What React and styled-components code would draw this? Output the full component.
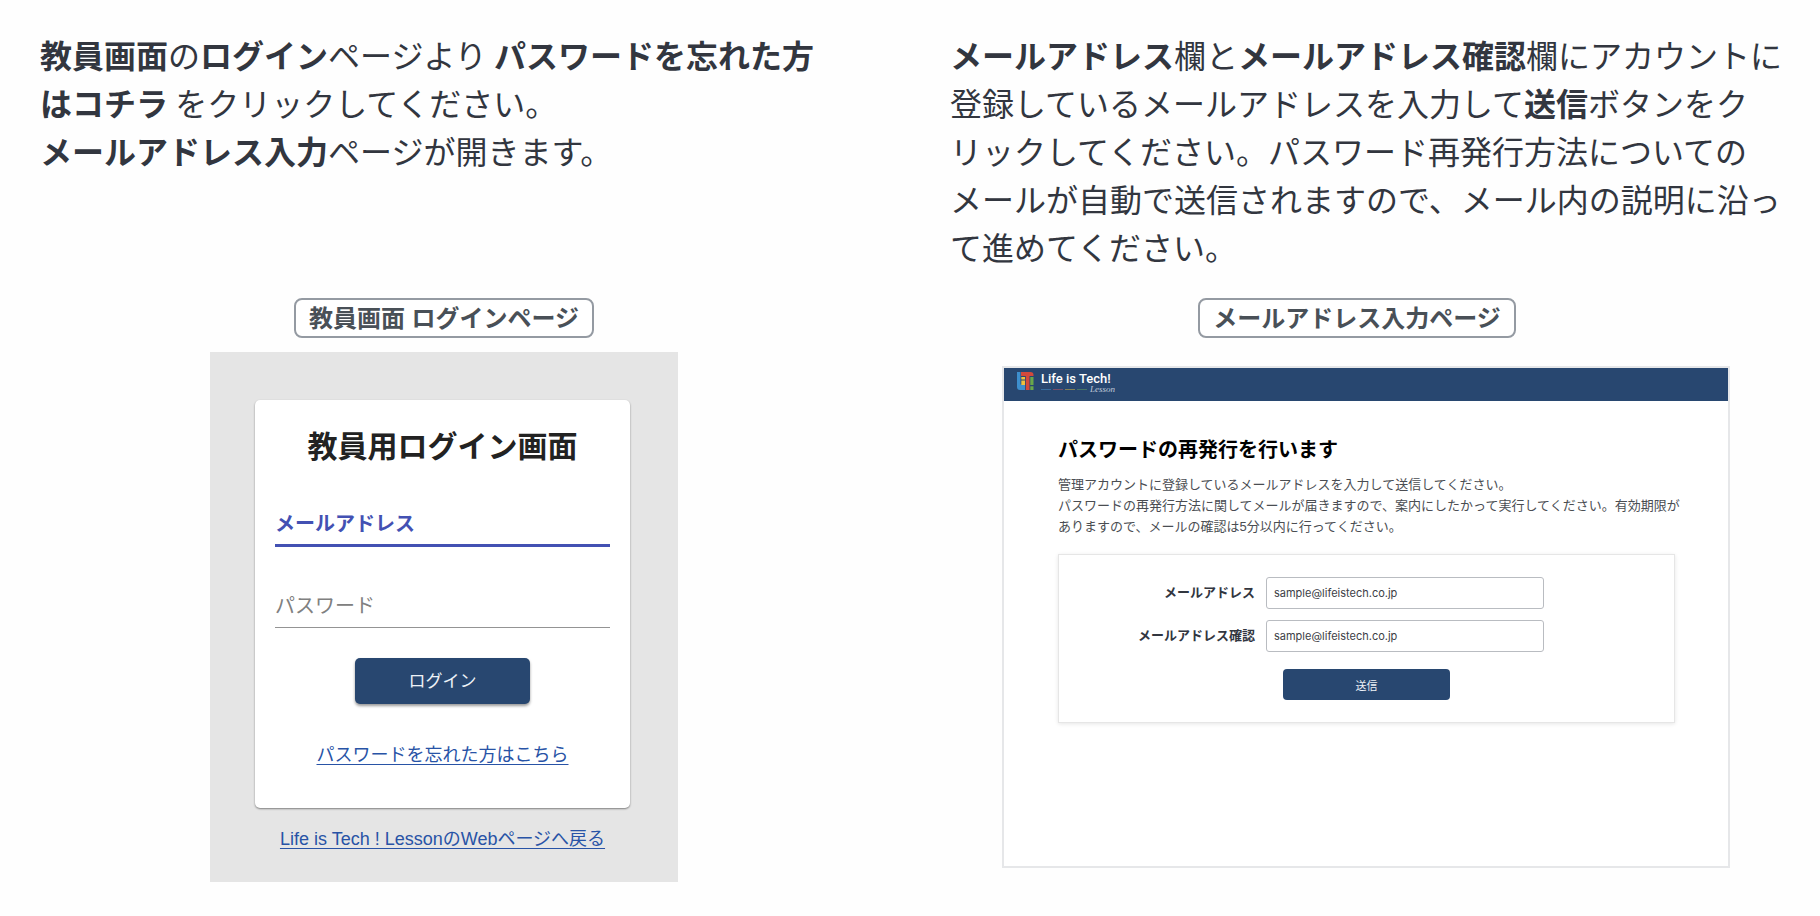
import React, { useState } from 'react';
import styled, { createGlobalStyle } from 'styled-components';

const GlobalStyle = createGlobalStyle`
  * {
    box-sizing: border-box;
  }
  body {
    margin: 0;
    background: #fefefe;
    color: #32363f;
    font-family: 'Liberation Sans', 'Noto Sans CJK JP', sans-serif;
  }
`;

const Guide = styled.main`
  display: grid;
  grid-template-columns: 1fr 1fr;
`;

const Step = styled.section`
  display: flex;
  flex-direction: column;
`;

const Description = styled.p`
  margin: 0;
  padding: 30px 0 0 40px;
  min-height: 298px;
  font-size: 32px;
  line-height: 48px;
  font-family: 'Noto Sans CJK JP', sans-serif;
  white-space: nowrap;
`;

const Figure = styled.figure`
  display: flex;
  flex-direction: column;
  align-items: center;
  gap: ${({ $gap }) => $gap}px;
  margin: 0;
  padding-right: ${({ $inset }) => $inset}px;
`;

const Caption = styled.figcaption`
  padding: 1px 13px 0;
  border: 2px solid #949aa2;
  border-radius: 8px;
  color: #495057;
  background: #fff;
  font: 700 24px/35px 'Liberation Sans', 'Noto Sans CJK JP', sans-serif;
`;

const LoginScreen = styled.div`
  display: flex;
  flex-direction: column;
  align-items: center;
  width: 100%;
  max-width: 468px;
  padding: 48px 48px 28px 45px;
  background: #e5e5e5;
`;

const LoginCard = styled.form`
  display: flex;
  flex-direction: column;
  align-items: center;
  width: 100%;
  padding: 25px 20px 38px;
  border-radius: 5px;
  background: #fff;
  box-shadow: 0 1px 2px rgba(0, 0, 0, 0.45);
`;

const LoginTitle = styled.h2`
  margin: 0 0 35px;
  color: #222;
  font-size: 30px;
  line-height: 44px;
`;

const LoginInput = styled.input`
  width: 100%;
  height: ${({ $active }) => ($active ? 43 : 42)}px;
  margin-bottom: ${({ $active }) => ($active ? 39 : 30)}px;
  padding: 0 0 4px;
  border: 0;
  border-bottom: ${({ $active }) => ($active ? '3px solid #4351b3' : '1px solid #949494')};
  border-radius: 0;
  background: transparent;
  color: #222;
  font: 20px 'Noto Sans CJK JP', sans-serif;
  outline: none;
  &::placeholder {
    color: ${({ $active }) => ($active ? '#4351b3' : '#808080')};
    font-weight: ${({ $active }) => ($active ? 700 : 400)};
    opacity: 1;
  }
`;

const Button = styled.button`
  border: 0;
  border-radius: 5px;
  background: #284770;
  color: #eef2f7;
  font-family: 'Noto Sans CJK JP', sans-serif;
  cursor: pointer;
`;

const LoginButton = styled(Button)`
  width: 175px;
  height: 46px;
  margin-bottom: 36px;
  padding-bottom: 4px;
  font-size: 17px;
  box-shadow: 0 2px 3px rgba(0, 0, 0, 0.4);
`;

const TextLink = styled.a`
  color: #2853a6;
  font-size: 18px;
  line-height: 30px;
  text-underline-offset: 3px;
`;

const BackLink = styled(TextLink)`
  margin-top: 16px;
`;

const ResetScreen = styled.div`
  width: calc(100% - 166px);
  margin-left: 18px;
  padding-bottom: 143px;
  border: 2px solid #e6e7e9;
  background: #fff;
`;

const TopBar = styled.header`
  display: flex;
  height: 33px;
  padding-left: 12px;
  background: #284770;
`;

const ResetBody = styled.div`
  padding: 35px 53px 0 54px;
`;

const ResetTitle = styled.h2`
  margin: 0 0 10px;
  color: #000;
  font-size: 20px;
  line-height: 28px;
`;

const ResetNote = styled.p`
  margin: 0 0 17px;
  color: #4a4d52;
  font-size: 13px;
  line-height: 21px;
  white-space: nowrap;
`;

const ResetForm = styled.form`
  display: flex;
  flex-direction: column;
  gap: 11px;
  padding: 22px 0;
  border: 1px solid #e6e6e6;
  box-shadow: 0 1px 4px rgba(0, 0, 0, 0.1);
`;

const Row = styled.div`
  display: grid;
  grid-template-columns: 196px 278px;
  align-items: center;
  column-gap: 11px;
`;

const RowLabel = styled.label`
  text-align: right;
  font-size: 13px;
  line-height: 20px;
  font-weight: 700;
`;

const RowInput = styled.input`
  width: 100%;
  height: 32px;
  padding: 0 7px;
  border: 1px solid #b9bcc1;
  border-radius: 3px;
  background: #fff;
  color: #3c4046;
  font: 11px Inter, 'Noto Sans CJK JP', sans-serif;
`;

const SendButton = styled(Button)`
  align-self: center;
  width: 167px;
  height: 31px;
  margin-top: 6px;
  border-radius: 4px;
  font-size: 11px;
`;

const LogoSvg = styled.svg`
  display: block;
  width: 104px;
  height: 28px;
`;

const Logo = () => (
  <LogoSvg viewBox="0 0 104 28" role="img" aria-label="Life is Tech! Lesson">
    {/* L, i, T and ! packed into one tile */}
    <path d="M1 4h3.500v12.500H9V22H4q-3 0-3-3z" fill="#3d8fce" />
    <path d="M5 4h9.500q3 0 3 3v1H13.500v14H9.800V8H5z" fill="#d2493c" />
    <path d="M5.300 9H9v2.500H5.300zM5.300 12.500H9V17H5.300z" fill="#efc13d" />
    <path d="M14.300 9h3.200v8h-3.200zM14.300 18.300h3.200V22h-3.200z" fill="#69a84a" />
    <text x="25" y="15" fill="#fff" fontFamily="Roboto, sans-serif" fontWeight="500" fontSize="13">Life is Tech!</text>
    <g strokeWidth="1">
      <path d="M25 21.500h10" stroke="#386e9f" />
      <path d="M37 21.500h10" stroke="#794e68" />
      <path d="M49 21.500h10" stroke="#858154" />
      <path d="M61 21.500h10" stroke="#477566" />
    </g>
    <text x="74" y="24" fill="#c3cddb" fontFamily="Liberation Serif, serif" fontStyle="italic" fontSize="9">Lesson</text>
  </LogoSvg>
);

const SAMPLE = 'sample@lifeistech.co.jp';

const App = () => {
  const [email, setEmail] = useState(SAMPLE);
  const [confirm, setConfirm] = useState(SAMPLE);

  return (
    <>
      <GlobalStyle />
      <Guide lang="ja">
        <Step>
          <Description>
            <b>教員画面</b>の<b>ログイン</b>ページより <b>パスワードを忘れた方</b>
            <br />
            <b>はコチラ</b> をクリックしてください。
            <br />
            <b>メールアドレス入力</b>ページが開きます。
          </Description>
          <Figure $gap={14} $inset={22}>
            <Caption>教員画面 ログインページ</Caption>
            <LoginScreen>
              <LoginCard onSubmit={(e) => e.preventDefault()}>
                <LoginTitle>教員用ログイン画面</LoginTitle>
                <LoginInput $active type="email" aria-label="メールアドレス" placeholder="メールアドレス" />
                <LoginInput type="password" aria-label="パスワード" placeholder="パスワード" />
                <LoginButton type="submit">ログイン</LoginButton>
                <TextLink href="#reset">パスワードを忘れた方はこちら</TextLink>
              </LoginCard>
              <BackLink href="#top">Life is Tech ! LessonのWebページへ戻る</BackLink>
            </LoginScreen>
          </Figure>
        </Step>

        <Step id="reset">
          <Description>
            <b>メールアドレス</b>欄と<b>メールアドレス確認</b>欄にアカウントに
            <br />
            登録しているメールアドレスを入力して<b>送信</b>ボタンをク
            <br />
            リックしてください。パスワード再発行方法についての
            <br />
            メールが自動で送信されますので、メール内の説明に沿っ
            <br />
            て進めてください。
          </Description>
          <Figure $gap={28} $inset={16}>
            <Caption>メールアドレス入力ページ</Caption>
            <ResetScreen>
              <TopBar><Logo /></TopBar>
              <ResetBody>
                <ResetTitle>パスワードの再発行を行います</ResetTitle>
                <ResetNote>
                  管理アカウントに登録しているメールアドレスを入力して送信してください。
                  <br />
                  パスワードの再発行方法に関してメールが届きますので、案内にしたかって実行してください。有効期限が
                  <br />
                  ありますので、メールの確認は5分以内に行ってください。
                </ResetNote>
                <ResetForm onSubmit={(e) => e.preventDefault()}>
                  <Row>
                    <RowLabel htmlFor="email">メールアドレス</RowLabel>
                    <RowInput id="email" type="email" value={email} onChange={(e) => setEmail(e.target.value)} />
                  </Row>
                  <Row>
                    <RowLabel htmlFor="confirm">メールアドレス確認</RowLabel>
                    <RowInput id="confirm" type="email" value={confirm} onChange={(e) => setConfirm(e.target.value)} />
                  </Row>
                  <SendButton type="submit">送信</SendButton>
                </ResetForm>
              </ResetBody>
            </ResetScreen>
          </Figure>
        </Step>
      </Guide>
    </>
  );
};

export default App;
